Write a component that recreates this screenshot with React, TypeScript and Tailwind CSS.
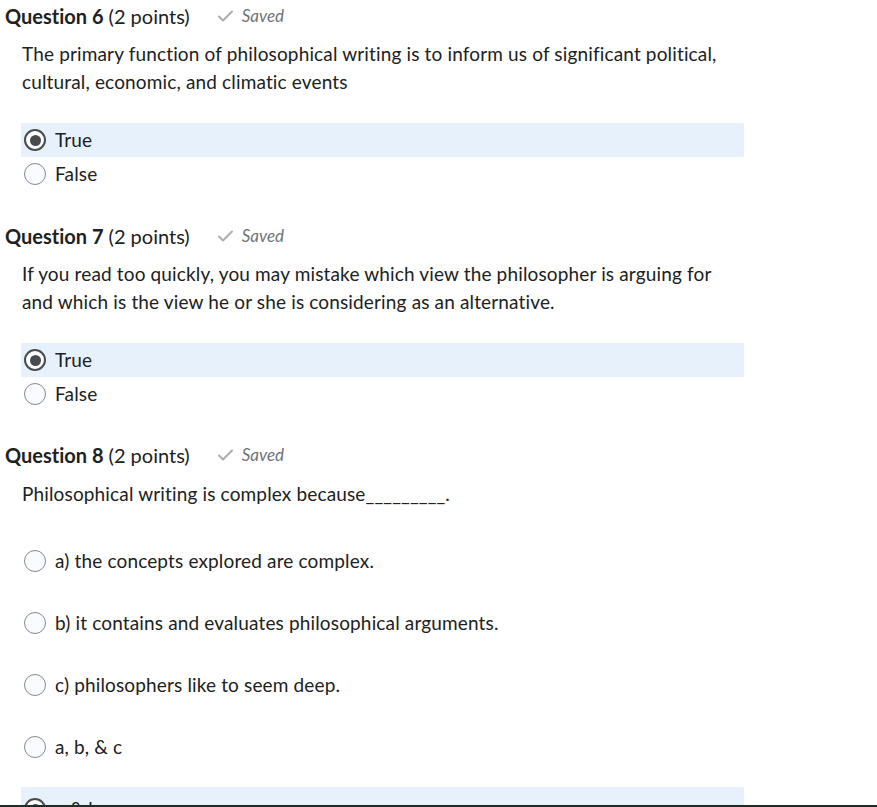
import React from "react"

type Option = { label: string; checked?: boolean }

function Radio({ checked }: { checked?: boolean }) {
  if (checked) {
    return (
      <span className="flex h-[22px] w-[22px] shrink-0 items-center justify-center rounded-full border-2 border-[#494c4e] bg-white">
        <span className="h-[11px] w-[11px] rounded-full bg-[#494c4e]" />
      </span>
    )
  }
  return <span className="h-[22px] w-[22px] shrink-0 rounded-full border border-[#868a8d] bg-[#f9fbff]" />
}

function Heading({ n }: { n: number }) {
  return (
    <div className="flex h-6 items-center pl-[5px] text-[20px] leading-6 text-[#202122]">
      <span className="font-bold">Question {n}</span>
      <span className="ml-[5px]">(2 points)</span>
      <span className="ml-[27px] flex items-center gap-[8px] text-[17px] italic text-[#6e7376]">
        <svg width="17" height="14" viewBox="0 0 17 14" fill="none">
          <path d="M2 7.5 L6 11.5 L15 2.5" stroke="#a9adb0" strokeWidth="2" strokeLinecap="round" strokeLinejoin="round" />
        </svg>
        Saved
      </span>
    </div>
  )
}

function TrueFalse({ n, text, answer }: { n: number; text: string[]; answer: boolean }) {
  return (
    <div>
      <Heading n={n} />
      <div className="ml-[22px] mt-[12px] text-[19px] leading-[28px] tracking-[0.15px] text-[#202122]">
        {text.map((t) => (
          <div key={t}>{t}</div>
        ))}
      </div>
      <div className="ml-[21px] mt-[27px] w-[723px]">
        {[true, false].map((v) => (
          <div
            key={String(v)}
            className={`flex h-[34px] items-center gap-[9px] pl-[3px] text-[19px] tracking-[0.15px] text-[#202122] ${v === answer ? "bg-[#e6f1fb]" : ""}`}
          >
            <Radio checked={v === answer} />
            <span>{v ? "True" : "False"}</span>
          </div>
        ))}
      </div>
    </div>
  )
}

const q8: Option[] = [
  { label: "a) the concepts explored are complex." },
  { label: "b) it contains and evaluates philosophical arguments." },
  { label: "c) philosophers like to seem deep." },
  { label: "a, b, & c" },
  { label: "a & b", checked: true },
]

export default function App() {
  return (
    <div className="relative min-h-screen bg-white pt-1 font-['Lato','Liberation_Sans',sans-serif] [font-variant-ligatures:none]">
      <TrueFalse
        n={6}
        answer={true}
        text={[
          "The primary function of philosophical writing is to inform us of significant political,",
          "cultural, economic, and climatic events",
        ]}
      />
      <div className="mt-[33px]">
        <TrueFalse
          n={7}
          answer={true}
          text={[
            "If you read too quickly, you may mistake which view the philosopher is arguing for",
            "and which is the view he or she is considering as an alternative.",
          ]}
        />
      </div>
      <div className="mt-[32px] pb-10">
        <Heading n={8} />
        <div className="ml-[22px] mt-[13px] text-[19px] leading-[28px] tracking-[0.15px] text-[#202122]">
          Philosophical writing is complex because_________.
        </div>
        <div className="ml-[21px] mt-[31px] flex w-[723px] flex-col gap-[18px]">
          {q8.map((o) => (
            <div
              key={o.label}
              className={`flex h-[44px] items-center gap-[9px] pl-[3px] text-[19px] tracking-[0.15px] text-[#202122] ${o.checked ? "bg-[#e6f1fb]" : ""}`}
            >
              <Radio checked={o.checked} />
              <span>{o.label}</span>
            </div>
          ))}
        </div>
      </div>
      <div className="fixed bottom-0 left-0 h-[2px] w-full bg-[#1e2c26]" />
    </div>
  )
}
